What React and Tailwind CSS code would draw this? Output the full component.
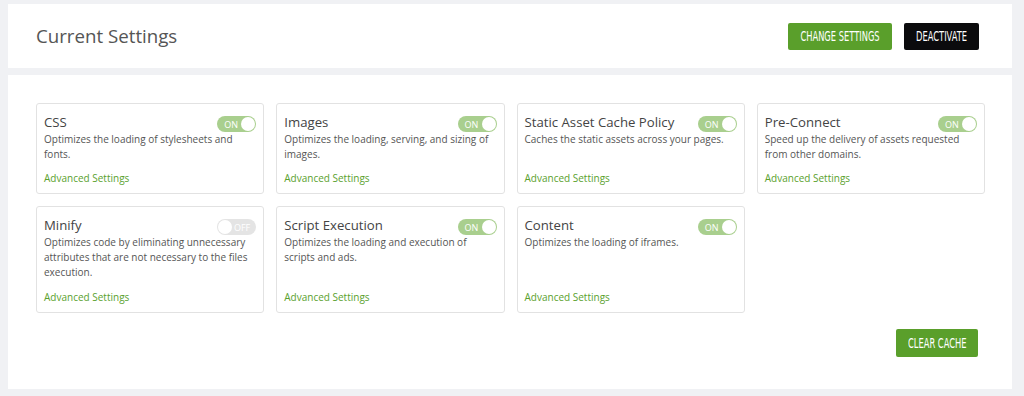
import React from "react";

const cards = [
  { title: "CSS", desc: "Optimizes the loading of stylesheets and fonts.", on: true },
  { title: "Images", desc: "Optimizes the loading, serving, and sizing of images.", on: true },
  { title: "Static Asset Cache Policy", desc: "Caches the static assets across your pages.", on: true },
  { title: "Pre-Connect", desc: "Speed up the delivery of assets requested from other domains.", on: true },
  { title: "Minify", desc: "Optimizes code by eliminating unnecessary attributes that are not necessary to the files execution.", on: false },
  { title: "Script Execution", desc: "Optimizes the loading and execution of scripts and ads.", on: true },
  { title: "Content", desc: "Optimizes the loading of iframes.", on: true },
];

function Toggle({ on }) {
  if (on) {
    return (
      <div className="flex h-[16px] w-[39px] shrink-0 items-center justify-between rounded-full bg-[#a9cf8e] pl-[7px] pr-[1px]">
        <span className="text-[9px] leading-none text-white">ON</span>
        <span className="h-[14px] w-[14px] rounded-full bg-white" />
      </div>
    );
  }
  return (
    <div className="flex h-[16px] w-[39px] shrink-0 items-center justify-between rounded-full bg-[#e4e4e4] pl-[1px] pr-[6px]">
      <span className="h-[14px] w-[14px] rounded-full bg-white" />
      <span className="text-[9px] leading-none text-white">OFF</span>
    </div>
  );
}

function Btn({ children, className }) {
  return (
    <button className={"flex h-[27px] items-center justify-center overflow-hidden whitespace-nowrap rounded-[2px] " + className}>
      <span className="inline-block origin-center scale-x-[0.66] whitespace-nowrap font-['Liberation_Sans_Narrow','DejaVu_Sans_Condensed',sans-serif] text-[14px] leading-none text-white">
        {children}
      </span>
    </button>
  );
}

export default function App() {
  return (
    <div className="min-h-[396px] w-[1024px] bg-[#f0f1f4] pl-[8px] pr-[12px] pt-[4px] pb-[7px] font-['Open_Sans',sans-serif]">
      <div className="flex h-[64px] items-center justify-between bg-white pl-[28px] pr-[33px]">
        <h1 className="text-[18.7px] text-[#555]">Current Settings</h1>
        <div className="flex gap-[12px]">
          <Btn className="w-[104px] bg-[#5a9f2b]">CHANGE SETTINGS</Btn>
          <Btn className="w-[75px] bg-[#0b0b0d]">DEACTIVATE</Btn>
        </div>
      </div>
      <div className="mt-[7px] bg-white pl-[28px] pt-[28px] pb-[32px] pr-[27px]">
        <div className="grid grid-cols-4 gap-x-[12px] gap-y-[12px]">
          {cards.map((c, i) => (
            <div
              key={c.title}
              className={
                "flex flex-col rounded-[3px] border border-[#e2e2e2] px-[7px] pt-[9px] pb-[7px] " +
                (i < 4 ? "h-[91px]" : "h-[107px]")
              }
            >
              <div className="flex items-start justify-between">
                <div className="text-[13.2px] leading-[19px] text-[#444]">{c.title}</div>
                <div className="mt-[3px]">
                  <Toggle on={c.on} />
                </div>
              </div>
              <p className="text-[10px] leading-[15px] text-[#555]">{c.desc}</p>
              <a className="mt-auto text-[10px] leading-[15px] text-[#5aa12d]">Advanced Settings</a>
            </div>
          ))}
        </div>
        <div className="mt-[16px] flex justify-end pr-[7px]">
          <Btn className="h-[28px] w-[82px] bg-[#5a9f2b]">CLEAR CACHE</Btn>
        </div>
      </div>
    </div>
  );
}
